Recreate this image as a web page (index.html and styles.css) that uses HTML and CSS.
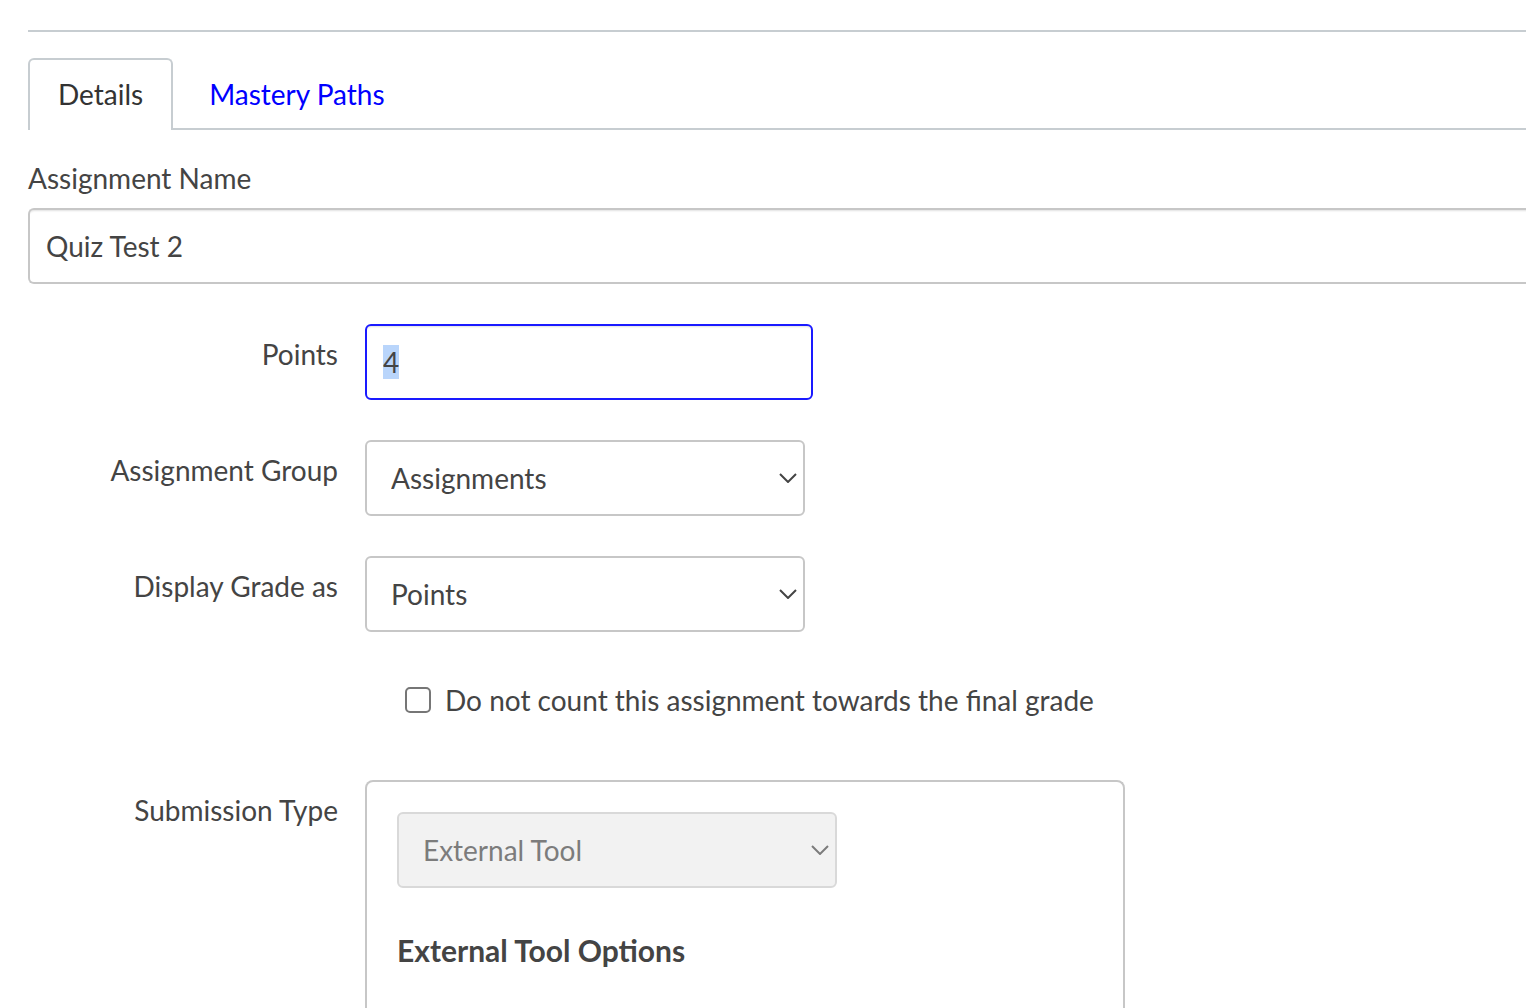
FILE: index.html
```html
<!DOCTYPE html>
<html lang="en">
<head>
<meta charset="utf-8">
<title>Edit Assignment</title>
<meta name="viewport" content="width=device-width, initial-scale=1">
<link rel="stylesheet" href="styles.css">
</head>
<body>
<main class="page">
  <nav class="tabs" aria-label="Assignment sections">
    <a class="tab tab-active" href="#details" aria-current="page">Details</a>
    <a class="tab" href="#mastery-paths">Mastery Paths</a>
    <span class="tabs-rest"></span>
  </nav>
  <form class="form" id="details">
    <div class="name-field">
      <label for="name">Assignment Name</label>
      <input class="control control-wide" id="name" type="text" value="Quiz Test 2">
    </div>
    <div class="row">
      <label class="row-label" for="points">Points</label>
      <input class="control control-points" id="points" type="text" value="4" autofocus>
    </div>
    <div class="row">
      <label class="row-label" for="group">Assignment Group</label>
      <div class="select-wrap">
        <select class="control control-select" id="group"><option>Assignments</option></select>
        <svg class="chevron" viewBox="0 0 18 10" aria-hidden="true"><path d="M1 1l8 8 8-8"/></svg>
      </div>
    </div>
    <div class="row">
      <label class="row-label" for="grading">Display Grade as</label>
      <div class="select-wrap">
        <select class="control control-select" id="grading"><option>Points</option></select>
        <svg class="chevron" viewBox="0 0 18 10" aria-hidden="true"><path d="M1 1l8 8 8-8"/></svg>
      </div>
    </div>
    <div class="row">
      <div class="check-row">
        <input class="checkbox" id="omit" type="checkbox">
        <label for="omit">Do not count this assignment towards the final grade</label>
      </div>
    </div>
    <div class="row row-fill">
      <label class="row-label" for="submission">Submission Type</label>
      <section class="panel">
        <div class="select-wrap select-disabled">
          <select class="control control-select" id="submission" disabled><option>External Tool</option></select>
          <svg class="chevron" viewBox="0 0 18 10" aria-hidden="true"><path d="M1 1l8 8 8-8"/></svg>
        </div>
        <h2 class="panel-title">External Tool Options</h2>
      </section>
    </div>
  </form>
</main>
<script src="script.js"></script>
</body>
</html>
```

FILE: styles.css
```css
*,
*::before,
*::after {
  box-sizing: border-box;
}

body {
  margin: 0;
  background: #fff;
  color: #444;
  font: 28px/40px Lato, "Liberation Sans", sans-serif;
}

.page {
  display: flex;
  flex-direction: column;
  min-height: 100vh;
  padding: 30px 0 0 28px;
}

.tabs {
  display: flex;
  padding-top: 26px;
  border-top: 2px solid #c7cdd1;
}

.tab {
  padding: 16px 28px 14px 36px;
  border-bottom: 2px solid #c7cdd1;
  color: #00f;
  text-decoration: none;
}

.tab-active {
  padding: 14px 28px 16px;
  border: 2px solid #c7cdd1;
  border-bottom: 0;
  border-radius: 6px 6px 0 0;
  color: #333;
}

.tabs-rest {
  flex: 1;
  border-bottom: 2px solid #c7cdd1;
}

.form {
  display: flex;
  flex: 1;
  flex-direction: column;
  gap: 40px;
  padding-top: 28px;
}

.name-field {
  display: flex;
  flex-direction: column;
  gap: 10px;
}

.control {
  height: 76px;
  padding: 0 16px;
  border: 2px solid #c7c7c7;
  border-radius: 6px;
  background: #fff;
  color: #444;
  font: inherit;
  outline: 0;
  box-shadow: inset 0 3px 2px -2px rgba(0, 0, 0, 0.12);
}

.control::selection {
  background: #b9d5fb;
  color: #444;
}

.control-wide {
  width: 100%;
  border-right: 0;
  border-radius: 6px 0 0 6px;
}

.control-points {
  width: 100%;
  max-width: 448px;
}

.control-points:focus {
  border-color: #1a1aff;
}

.row {
  display: grid;
  grid-template-columns: 310px minmax(0, 1fr);
  column-gap: 27px;
}

.row-label {
  padding-top: 10px;
  text-align: right;
}

.select-wrap {
  position: relative;
  max-width: 440px;
}

.control-select {
  display: block;
  width: 100%;
  padding: 0 24px;
  appearance: none;
  box-shadow: none;
}

.chevron {
  position: absolute;
  top: 33px;
  right: 8px;
  width: 18px;
  height: 10px;
  fill: none;
  stroke: #444;
  stroke-width: 2;
  pointer-events: none;
}

.select-disabled .control {
  border-color: #d9d9d9;
  background: #f2f2f2;
  color: #7c7c7c;
  opacity: 1;
}

.select-disabled .chevron {
  stroke: #7c7c7c;
}

.check-row {
  display: flex;
  grid-column: 2;
  align-items: center;
  gap: 14px;
  padding: 8px 0 20px 40px;
}

.checkbox {
  flex: none;
  width: 26px;
  height: 26px;
  margin: 0;
  border: 2px solid #767676;
  border-radius: 5px;
  background: #fff;
  appearance: none;
}

.checkbox:checked {
  background: #767676;
}

.row-fill {
  flex: 1;
}

.panel {
  max-width: 760px;
  padding: 30px;
  border: 2px solid #c7c7c7;
  border-bottom: 0;
  border-radius: 8px 8px 0 0;
}

.panel-title {
  margin: 42px 0 0;
  font-size: 30px;
  font-weight: 700;
  line-height: 40px;
}
```

FILE: script.js
```js
const points = document.getElementById("points");
points.focus();
points.select();
```
